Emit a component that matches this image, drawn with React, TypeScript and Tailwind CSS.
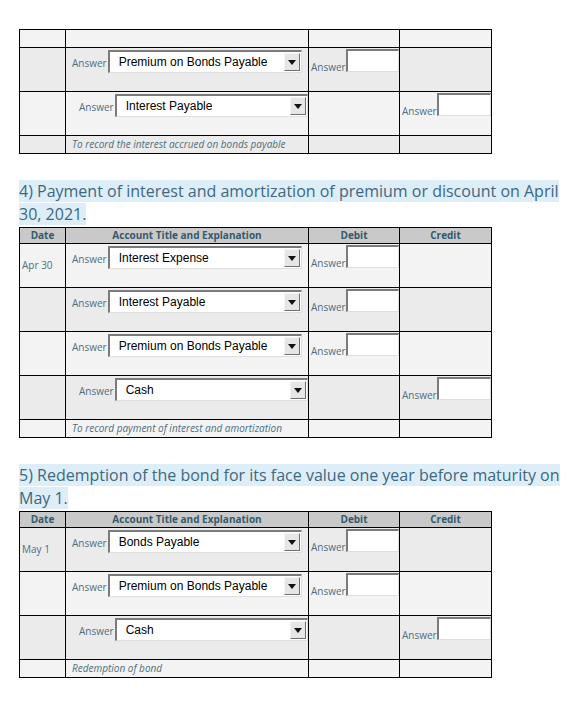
import React from "react";

const teal = "text-[#4d6f7f]";

function Arrow() {
  return (
    <span className="flex h-[18px] w-[16px] items-center justify-center border border-t-[#f4f4f4] border-l-[#f4f4f4] border-r-[#6f6f6f] border-b-[#6f6f6f] bg-[#e6e6e6]">
      <svg width="8" height="5" viewBox="0 0 8 5">
        <path d="M0 0 H8 L4 5 Z" fill="#111" />
      </svg>
    </span>
  );
}

function Select({ value }: { value: string }) {
  return (
    <div className="flex h-[23px] w-[194px] items-start justify-between border-t-2 border-l-2 border-r border-b border-t-[#7b7b7b] border-l-[#7b7b7b] border-r-[#dedede] border-b-[#dedede] bg-white pr-[1px] pt-[1px]">
      <span className="pl-[9px] pt-[2px] font-['Liberation_Sans',Arial,sans-serif] text-[12px] leading-[14px] text-black">
        {value}
      </span>
      <Arrow />
    </div>
  );
}

function Input({ w }: { w: string }) {
  return (
    <div
      className={`h-[23px] ${w} border-t-2 border-l-2 border-r border-b border-t-[#7b7b7b] border-l-[#7b7b7b] border-r-[#dedede] border-b-[#dedede] bg-white`}
    />
  );
}

function Label() {
  return <span className={`text-[10px] leading-[10px] ${teal}`}>Answer</span>;
}

type Line = { date?: string; account: string; side: "dr" | "cr"; indent?: boolean };

function Row({ line, dark }: { line: Line; dark: boolean }) {
  const bg = dark ? "bg-[#ebebeb]" : "bg-[#f3f3f3]";
  return (
    <tr className={`h-[44px] ${bg}`}>
      <td className={`border border-black pl-[2px] align-middle text-[10px] ${teal}`}>{line.date}</td>
      <td className="border border-black align-top">
        <div className={`flex items-end pt-[1px] ${line.indent ? "pl-[13px]" : "pl-[6px]"}`}>
          <span className="pr-[1px]">
            <Label />
          </span>
          <Select value={line.account} />
        </div>
      </td>
      <td className="border border-black align-top">
        {line.side === "dr" && (
          <div className="flex items-end pl-[2px] pt-[1px]">
            <Label />
            <Input w="w-[53px]" />
          </div>
        )}
      </td>
      <td className="border border-black align-top">
        {line.side === "cr" && (
          <div className="flex items-end pl-[2px] pt-[1px]">
            <Label />
            <Input w="w-[55px]" />
          </div>
        )}
      </td>
    </tr>
  );
}

function Cols() {
  return (
    <colgroup>
      <col className="w-[46px]" />
      <col className="w-[243px]" />
      <col className="w-[91px]" />
      <col className="w-[92px]" />
    </colgroup>
  );
}

function Header() {
  return (
    <tr className="h-[16px] bg-[#c9c9c9] text-[10px] font-bold text-[#345a6b]">
      <td className="border border-black text-center">Date</td>
      <td className="border border-black text-center">Account Title and Explanation</td>
      <td className="border border-black text-center">Debit</td>
      <td className="border border-black text-center">Credit</td>
    </tr>
  );
}

function Explain({ text, dark }: { text: string; dark: boolean }) {
  const bg = dark ? "bg-[#ebebeb]" : "bg-[#f3f3f3]";
  return (
    <tr className={`h-[18px] ${bg}`}>
      <td className="border border-black" />
      <td className={`border border-black pl-[6px] text-[10px] italic ${teal}`}>{text}</td>
      <td className="border border-black" />
      <td className="border border-black" />
    </tr>
  );
}

function Journal({
  lines,
  explain,
  header = true,
  startDark = false,
}: {
  lines: Line[];
  explain: string;
  header?: boolean;
  startDark?: boolean;
}) {
  return (
    <table className="w-[473px] table-fixed border-collapse">
      <Cols />
      <tbody>
        {header ? (
          <Header />
        ) : (
          <tr className="h-[18px] bg-[#f3f3f3]">
            <td className="border border-black" />
            <td className="border border-black" />
            <td className="border border-black" />
            <td className="border border-black" />
          </tr>
        )}
        {lines.map((l, i) => (
          <Row key={i} line={l} dark={(i % 2 === 0) === (startDark || !header)} />
        ))}
        <Explain text={explain} dark={(lines.length % 2 === 0) === (startDark || !header)} />
      </tbody>
    </table>
  );
}

function Heading({ children }: { children: React.ReactNode }) {
  return (
    <p className="mt-[26px] mb-[1px] pr-[10px] text-[16px] leading-[23px] text-[#3d6880]">
      <span className="bg-[#deeef8]">{children}</span>
    </p>
  );
}

export default function App() {
  return (
    <div className="min-h-[724px] bg-white pl-[19px] pt-[29px] font-['Open_Sans',sans-serif]">
      <Journal
        header={false}
        lines={[
          { account: "Premium on Bonds Payable", side: "dr" },
          { account: "Interest Payable", side: "cr", indent: true },
        ]}
        explain="To record the interest accrued on bonds payable"
      />

      <Heading>4) Payment of interest and amortization of premium or discount on April 30, 2021.</Heading>
      <Journal
        lines={[
          { date: "Apr 30", account: "Interest Expense", side: "dr" },
          { account: "Interest Payable", side: "dr" },
          { account: "Premium on Bonds Payable", side: "dr" },
          { account: "Cash", side: "cr", indent: true },
        ]}
        explain="To record payment of interest and amortization"
      />

      <Heading>5) Redemption of the bond for its face value one year before maturity on May 1.</Heading>
      <Journal
        startDark
        lines={[
          { date: "May 1", account: "Bonds Payable", side: "dr" },
          { account: "Premium on Bonds Payable", side: "dr" },
          { account: "Cash", side: "cr", indent: true },
        ]}
        explain="Redemption of bond"
      />
    </div>
  );
}
